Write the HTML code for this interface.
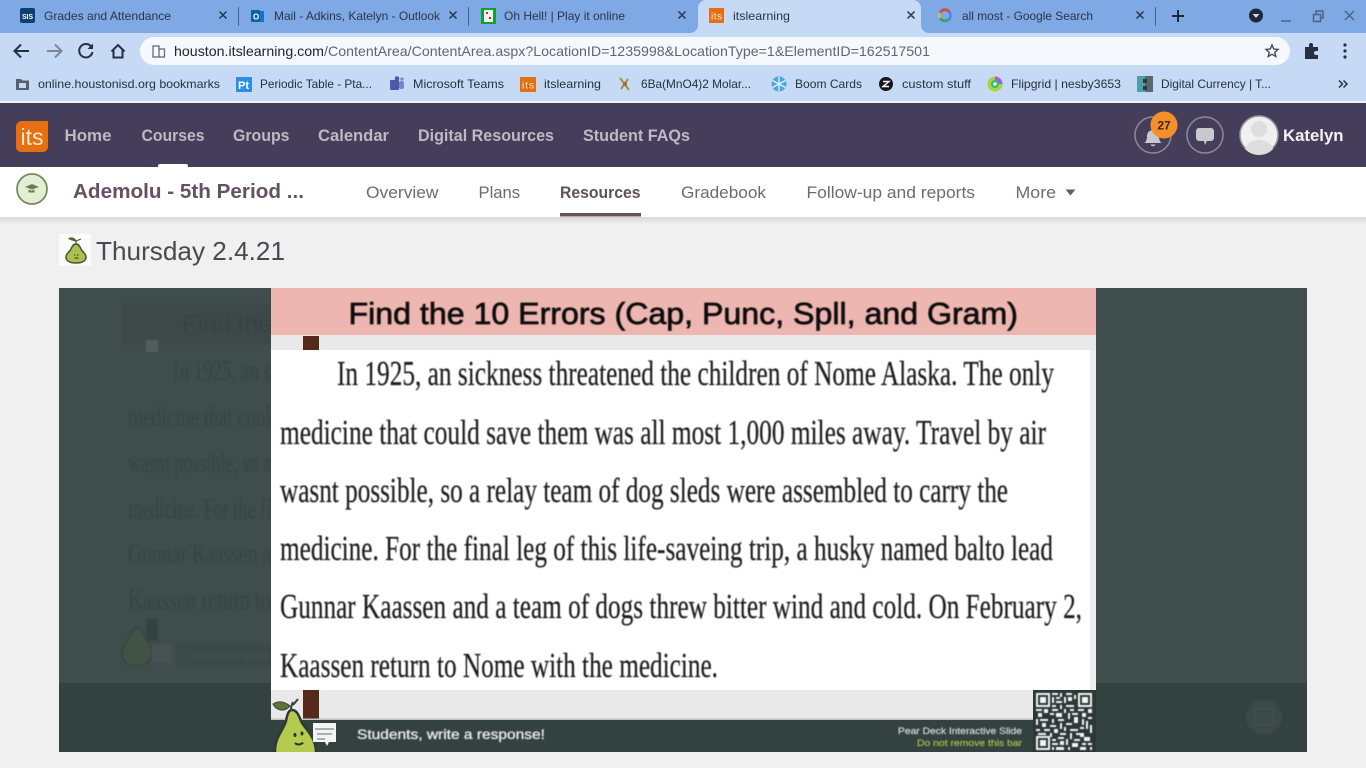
<!DOCTYPE html>
<html><head><meta charset="utf-8"><title>itslearning</title>
<style>
html,body{margin:0;padding:0;width:1366px;height:768px;overflow:hidden;background:#f0f0f0}
svg{display:block}
text{font-family:"Liberation Sans",sans-serif}
.t{font-size:12px;fill:#2a3448}
.b{font-size:12px;fill:#26303f}
.n{font-size:17px;font-weight:bold;fill:#bdbac6}
.s{font-size:17px;fill:#6f6a72}
.p{font-family:"Liberation Serif",serif;font-size:35px;fill:#1c1c1c;stroke:#1c1c1c;stroke-width:.2px}
.g{font-family:"Liberation Serif",serif;font-size:28px;fill:#364443}
</style></head><body>
<svg width="1366" height="768" viewBox="0 0 1366 768" xmlns="http://www.w3.org/2000/svg">
<defs>
<filter id="bl" x="-5%" y="-5%" width="110%" height="110%"><feGaussianBlur stdDeviation="0.45"/></filter>
<filter id="bl2" x="-5%" y="-5%" width="110%" height="110%"><feGaussianBlur stdDeviation="0.8"/></filter>
<linearGradient id="sh" x1="0" x2="0" y1="0" y2="1"><stop offset="0" stop-color="#d9d9d9"/><stop offset="1" stop-color="#f0f0f0"/></linearGradient>
</defs>
<rect width="1366" height="768" fill="#f0f0f0"/>
<!-- tab strip -->
<rect width="1366" height="33" fill="#7fa9e5"/>
<rect y="33" width="1366" height="68" fill="#c6d9f5"/>
<rect y="101" width="1366" height="2" fill="#eef1f6"/>
<path d="M690 33a8 8 0 0 0 8-8V8a8 8 0 0 1 8-8h207a8 8 0 0 1 8 8v17a8 8 0 0 0 8 8z" fill="#c6d9f5"/>
<rect x="238" y="7" width="1" height="19" fill="#46648f"/><rect x="468" y="7" width="1" height="19" fill="#46648f"/><rect x="1155" y="7" width="1" height="19" fill="#46648f"/>
<!-- tab favicons -->
<rect x="20" y="8" width="15" height="15" rx="2" fill="#0e3f73"/><text x="22" y="19" style="font-size:7px;font-weight:bold;fill:#fff" textLength="11">SIS</text>
<rect x="253" y="11" width="11" height="11" fill="#1a72c4"/><rect x="251" y="10" width="9" height="12" rx="1" fill="#0f5ea8"/><text x="253" y="19.500" style="font-size:8px;font-weight:bold;fill:#fff">O</text>
<rect x="481" y="8" width="15" height="16" fill="#14a02e"/><rect x="484" y="10" width="9" height="12" fill="#f4f4f4"/><rect x="486" y="12" width="2" height="2" fill="#c22"/><rect x="489" y="17" width="2" height="2" fill="#c22"/>
<rect x="709" y="8" width="15" height="15" fill="#e56f14"/><text x="711" y="19.500" style="font-size:10px;fill:#ffe8d0" textLength="11">its</text>
<circle cx="945" cy="15.500" r="5.500" fill="none" stroke="#4285f4" stroke-width="2.400"/><path d="M949.500 12a5.500 5.500 0 0 0-9-.3" fill="none" stroke="#ea4335" stroke-width="2.400"/><path d="M940 13a5.500 5.500 0 0 0 0 5" fill="none" stroke="#fbbc05" stroke-width="2.400"/><path d="M940.500 18.800a5.500 5.500 0 0 0 8 .5" fill="none" stroke="#34a853" stroke-width="2.400"/>
<!-- tab titles -->
<text class="t" x="44" y="20" textLength="127" lengthAdjust="spacingAndGlyphs">Grades and Attendance</text>
<text class="t" x="274" y="20" textLength="166" lengthAdjust="spacingAndGlyphs">Mail - Adkins, Katelyn - Outlook</text>
<text class="t" x="504" y="20" textLength="121" lengthAdjust="spacingAndGlyphs">Oh Hell! | Play it online</text>
<text class="t" x="733" y="20" textLength="57" lengthAdjust="spacingAndGlyphs">itslearning</text>
<text class="t" x="962" y="20" textLength="131" lengthAdjust="spacingAndGlyphs">all most - Google Search</text>
<g stroke="#27354d" stroke-width="1.500" fill="none">
<path d="M219.500 11.500l7 7m0-7l-7 7M449.500 11.500l7 7m0-7l-7 7M678.500 11.500l7 7m0-7l-7 7M907.500 11.500l7 7m0-7l-7 7M1136.500 11.500l7 7m0-7l-7 7"/>
</g>
<path d="M1178 10v12M1172 16h12" stroke="#1d2738" stroke-width="2" fill="none"/>
<circle cx="1256" cy="15.500" r="7" fill="#202735"/><path d="M1252.500 14h7l-3.500 4z" fill="#c6d9f5"/>
<path d="M1281 21h10" stroke="#4d6283" stroke-width="1.500"/>
<path d="M1313.500 14.500h7v7h-7zM1316 14v-3h7v7h-2.500" fill="none" stroke="#4d6283" stroke-width="1.500"/>
<path d="M1345 11l9 9m0-9l-9 9" stroke="#4d6283" stroke-width="1.500"/>
<!-- toolbar -->
<path d="M29 51H15M21 44.500L14.500 51l6.500 6.500" fill="none" stroke="#27303f" stroke-width="2"/>
<path d="M47 51h14M55 44.500l6.500 6.500-6.500 6.500" fill="none" stroke="#7d8797" stroke-width="2"/>
<path d="M91.500 47a6.700 6.700 0 1 0 1 5" fill="none" stroke="#27303f" stroke-width="2"/><path d="M93 43.500v5.500h-5.500z" fill="#27303f"/>
<path d="M111.500 51.500l6.500-6.500 6.500 6.500M113.500 50v7.500h9V50" fill="none" stroke="#27303f" stroke-width="2"/>
<rect x="140" y="37" width="1150" height="28" rx="14" fill="#f5f8fd"/>
<path d="M153 46h6v11h-6zM159 49h5.500v8H159z" fill="none" stroke="#5b6470" stroke-width="1.200"/>
<text x="174" y="56" style="font-size:14px" textLength="756" lengthAdjust="spacingAndGlyphs"><tspan fill="#20242b">houston.itslearning.com</tspan><tspan fill="#5e6670">/ContentArea/ContentArea.aspx?LocationID=1235998&amp;LocationType=1&amp;ElementID=162517501</tspan></text>
<path d="M1272 45l1.800 4 4.300.4-3.300 2.900 1 4.200-3.800-2.300-3.800 2.300 1-4.200-3.300-2.900 4.300-.4z" fill="none" stroke="#3a414c" stroke-width="1.300"/>
<path d="M1305 47h4v-2a2 2 0 0 1 4 0v2h5v4h-2a2 2 0 0 0 0 4h2v4h-13z" fill="#27303f"/>
<circle cx="1345" cy="45" r="1.600" fill="#27303f"/><circle cx="1345" cy="51" r="1.600" fill="#27303f"/><circle cx="1345" cy="57" r="1.600" fill="#27303f"/>
<!-- bookmarks -->
<path d="M16 79h5l1.500 1.500H29V90H16z" fill="#55606e"/><rect x="19" y="83" width="7" height="5" fill="#c6d9f5"/>
<text class="b" x="38" y="88" textLength="182" lengthAdjust="spacingAndGlyphs">online.houstonisd.org bookmarks</text>
<rect x="236" y="77" width="16" height="15" fill="#2e8fe0"/><text x="238" y="89" style="font-size:11px;font-weight:bold;fill:#fff">Pt</text>
<text class="b" x="260" y="88" textLength="112" lengthAdjust="spacingAndGlyphs">Periodic Table - Pta...</text>
<rect x="390" y="80" width="9" height="10" rx="1" fill="#5059a9"/><circle cx="397" cy="78.500" r="2.300" fill="#5059a9"/><rect x="399" y="81" width="5" height="8" rx="2" fill="#7b83c9"/><circle cx="402" cy="79" r="1.600" fill="#7b83c9"/>
<text class="b" x="413" y="88" textLength="91" lengthAdjust="spacingAndGlyphs">Microsoft Teams</text>
<rect x="520" y="77" width="16" height="15" fill="#e56f14"/><text x="522" y="88.500" style="font-size:10px;fill:#ffe8d0" textLength="12">its</text>
<text class="b" x="544" y="88" textLength="57" lengthAdjust="spacingAndGlyphs">itslearning</text>
<path d="M620 78l9 12M628 79l-7 10" stroke="#8a9a4a" stroke-width="2"/><circle cx="625" cy="84" r="2" fill="#c65a2a"/>
<text class="b" x="641" y="88" textLength="110" lengthAdjust="spacingAndGlyphs">6Ba(MnO4)2 Molar...</text>
<circle cx="779" cy="84" r="7.500" fill="#4aa9d9"/><path d="M779 77v14M772.500 80.500l13 7M785.500 80.500l-13 7" stroke="#dff2fb" stroke-width="1.300"/>
<text class="b" x="795" y="88" textLength="67" lengthAdjust="spacingAndGlyphs">Boom Cards</text>
<circle cx="886" cy="84" r="7" fill="#14161a"/><path d="M883 81.500h6l-6 5h6" stroke="#fff" stroke-width="1.400" fill="none"/>
<text class="b" x="902" y="88" textLength="69" lengthAdjust="spacingAndGlyphs">custom stuff</text>
<circle cx="995" cy="84" r="7.500" fill="#a7d83a"/><path d="M995 76.500a7.500 7.500 0 0 1 7.500 7.500H995z" fill="#a35ed9"/><circle cx="995" cy="84" r="4" fill="#2fbf70"/><circle cx="995" cy="84" r="1.800" fill="#fff"/>
<text class="b" x="1011" y="88" textLength="110" lengthAdjust="spacingAndGlyphs">Flipgrid | nesby3653</text>
<rect x="1137" y="76" width="16" height="16" fill="#4b9fa8"/><rect x="1145" y="76" width="8" height="16" fill="#5d6670"/><rect x="1143" y="79" width="4" height="4" fill="#2c3b42"/><rect x="1143" y="86" width="4" height="4" fill="#2c3b42"/>
<text class="b" x="1161" y="88" textLength="110" lengthAdjust="spacingAndGlyphs">Digital Currency | T...</text>
<path d="M1339 80.500l3.500 3.500-3.500 3.500M1343.500 80.500l3.500 3.500-3.500 3.500" fill="none" stroke="#27303f" stroke-width="1.500"/>
<!-- app nav -->
<rect y="103" width="1366" height="64" fill="#453e5a"/>
<path d="M22 121h26v26a5 5 0 0 1-5 5H21a5 5 0 0 1-5-5v-20a6 6 0 0 1 6-6z" fill="#e86f11"/>
<text x="20.500" y="145" style="font-size:23px;fill:#fde6cf" textLength="23" lengthAdjust="spacingAndGlyphs">its</text>
<text class="n" x="64.500" y="141" textLength="47" lengthAdjust="spacingAndGlyphs">Home</text>
<text class="n" x="141.500" y="141" textLength="63" lengthAdjust="spacingAndGlyphs">Courses</text>
<text class="n" x="233" y="141" textLength="56.500" lengthAdjust="spacingAndGlyphs">Groups</text>
<text class="n" x="318" y="141" textLength="71" lengthAdjust="spacingAndGlyphs">Calendar</text>
<text class="n" x="418" y="141" textLength="136" lengthAdjust="spacingAndGlyphs">Digital Resources</text>
<text class="n" x="583" y="141" textLength="107" lengthAdjust="spacingAndGlyphs">Student FAQs</text>
<path d="M158 167v-1a2 2 0 0 1 2-2h26a2 2 0 0 1 2 2v1z" fill="#fff"/>
<circle cx="1153" cy="135" r="18" fill="none" stroke="#8e8a9b" stroke-width="1.500"/>
<path d="M1144.500 143c2-2 2.500-4 2.500-7a6 6 0 0 1 12 0c0 3 .5 5 2.500 7z" fill="#c9c7d0"/><path d="M1150.500 144.500a2.700 2.700 0 0 0 5 0z" fill="#c9c7d0"/>
<circle cx="1164" cy="125" r="13.500" fill="#f58f2a"/>
<text x="1164" y="129.500" text-anchor="middle" style="font-size:12px;font-weight:bold;fill:#3a2a20">27</text>
<circle cx="1205" cy="135" r="18" fill="none" stroke="#8e8a9b" stroke-width="1.500"/>
<path d="M1199 128h12a3 3 0 0 1 3 3v7a3 3 0 0 1-3 3h-4l-2 4-1-4h-5a3 3 0 0 1-3-3v-7a3 3 0 0 1 3-3z" fill="#c9c7d0"/>
<circle cx="1259" cy="135" r="19" fill="#f0f0f0" stroke="#9b97a6" stroke-width="1.500"/>
<circle cx="1259" cy="129" r="8" fill="#dedede"/><path d="M1245 149c2-7 8-9 14-9s12 2 14 9a19 19 0 0 1-28 0z" fill="#dedede"/>
<text x="1283" y="141" style="font-size:17px;font-weight:bold;fill:#f3f2f5" textLength="60.500" lengthAdjust="spacingAndGlyphs">Katelyn</text>
<!-- sub nav -->
<rect y="217" width="1366" height="8" fill="url(#sh)"/>
<rect y="167" width="1366" height="50" fill="#fff"/>
<circle cx="32" cy="189" r="15" fill="#e3efd2" stroke="#75875f" stroke-width="1.700"/>
<path d="M25 187l7-3 7 3-7 2.500z" fill="#6a7b5a"/><path d="M28.500 189.500v3h6v-3l-3 1.200z" fill="#6a7b5a"/>
<text x="73" y="198" style="font-size:20px;font-weight:bold;fill:#635263" textLength="231" lengthAdjust="spacingAndGlyphs">Ademolu - 5th Period ...</text>
<text class="s" x="366" y="198" textLength="72.500" lengthAdjust="spacingAndGlyphs">Overview</text>
<text class="s" x="478.500" y="198" textLength="41.500" lengthAdjust="spacingAndGlyphs">Plans</text>
<text x="560" y="198" style="font-size:17px;font-weight:bold;fill:#5f5060" textLength="80.500" lengthAdjust="spacingAndGlyphs">Resources</text>
<rect x="560" y="213" width="81" height="3.500" fill="#65525f"/>
<text class="s" x="681" y="198" textLength="85" lengthAdjust="spacingAndGlyphs">Gradebook</text>
<text class="s" x="806.500" y="198" textLength="168.500" lengthAdjust="spacingAndGlyphs">Follow-up and reports</text>
<text class="s" x="1015.500" y="198" textLength="40.500" lengthAdjust="spacingAndGlyphs">More</text>
<path d="M1065.500 189.500h10l-5 6z" fill="#6a5a68"/>
<!-- heading -->
<rect x="59" y="234" width="32" height="32" fill="#fbfbfb"/>
<path d="M76 244c3 0 4 3 5 5 1.500 3 5 4.500 5 8 0 4-4 6-10 6s-10-2-10-6c0-3.500 3.500-5 5-8 1-2 2-5 5-5z" fill="#a8c24a" stroke="#4a4f3c" stroke-width="1.500"/>
<path d="M76 244v-4M76 241c-3-1-5-1-7-2.500 2-1 5-1 7 2.500zM76 241l5-2" stroke="#4f6430" stroke-width="1.200" fill="#5a7236"/>
<path d="M74 255h1.500M77 255h1.500M74.500 258h4" stroke="#4a4f3c" stroke-width="1.200"/>
<text x="96" y="260" style="font-size:26px;fill:#4b484f" textLength="189" lengthAdjust="spacingAndGlyphs">Thursday 2.4.21</text>
<!-- embed background -->
<rect x="59" y="288" width="1248" height="395" fill="#3f4d4c"/>
<rect x="59" y="683" width="1248" height="69" fill="#33413f"/>
<g filter="url(#bl2)">
<rect x="122" y="303" width="150" height="42" fill="#3c4a49"/>
<rect x="146" y="340" width="12" height="12" fill="#505d5c"/>
<text x="182" y="332" style="font-size:24px;fill:#364443;stroke:#364443;stroke-width:.4px" textLength="90" lengthAdjust="spacingAndGlyphs">Find the</text>
<text class="g" x="173" y="380" textLength="98" lengthAdjust="spacingAndGlyphs">In 1925, an s</text>
<text class="g" x="128" y="426" textLength="143" lengthAdjust="spacingAndGlyphs">medicine that coul</text>
<text class="g" x="128" y="472" textLength="143" lengthAdjust="spacingAndGlyphs">wasnt possible, so a</text>
<text class="g" x="128" y="518" textLength="143" lengthAdjust="spacingAndGlyphs">medicine. For the fi</text>
<text class="g" x="128" y="563" textLength="143" lengthAdjust="spacingAndGlyphs">Gunnar Kaassen a</text>
<text class="g" x="128" y="609" textLength="143" lengthAdjust="spacingAndGlyphs">Kaassen return to</text>
<rect x="146" y="619" width="12" height="22" fill="#364342"/>
<rect x="175" y="643" width="96" height="24" fill="#3a4847"/>
<path d="M138 628c4 0 5 4 6 8 2 5 8 8 8 17 0 6-5 13-16 13s-14-7-14-13c0-9 6-12 8-17 1-4 4-8 8-8z" fill="#3f5245" stroke="#34423f" stroke-width="1.500"/>
<rect x="152" y="645" width="20" height="18" fill="#465352"/>
<text x="189" y="659" style="font-size:11px;fill:#465352" textLength="80" lengthAdjust="spacingAndGlyphs">Students, write</text>
<circle cx="1264" cy="717" r="18" fill="#3a4846"/>
<rect x="1255" y="709" width="18" height="16" fill="none" stroke="#3f4d4b" stroke-width="2.500"/>
</g>
<!-- slide -->
<rect x="271" y="288" width="825" height="47" fill="#eeb6b1"/>
<rect x="271" y="335" width="825" height="15" fill="#e9e9e9"/>
<rect x="303" y="336" width="16" height="14" fill="#562a18"/>
<rect x="271" y="350" width="825" height="340" fill="#fff"/>
<rect x="1090" y="350" width="6" height="340" fill="#eeeeee"/>
<rect x="271" y="690" width="762" height="29" fill="#e9e9e9"/>
<rect x="303" y="690" width="16" height="29" fill="#562a18"/>
<rect x="271" y="719" width="825" height="33" fill="#33413f"/>
<rect x="271" y="718.500" width="762" height="1.500" fill="#bfc4c3"/>
<g filter="url(#bl)">
<text x="348.500" y="324" style="font-size:31px;fill:#0c0c0c;stroke:#0c0c0c;stroke-width:.7px" textLength="669.500" lengthAdjust="spacingAndGlyphs">Find the 10 Errors (Cap, Punc, Spll, and Gram)</text>
<text class="p" x="337" y="385" textLength="717" lengthAdjust="spacingAndGlyphs">In 1925, an sickness threatened the children of Nome Alaska. The only</text>
<text class="p" x="280" y="444" textLength="766" lengthAdjust="spacingAndGlyphs">medicine that could save them was all most 1,000 miles away. Travel by air</text>
<text class="p" x="280" y="502" textLength="728" lengthAdjust="spacingAndGlyphs">wasnt possible, so a relay team of dog sleds were assembled to carry the</text>
<text class="p" x="280" y="560" textLength="773" lengthAdjust="spacingAndGlyphs">medicine. For the final leg of this life-saveing trip, a husky named balto lead</text>
<text class="p" x="280" y="618" textLength="802" lengthAdjust="spacingAndGlyphs">Gunnar Kaassen and a team of dogs threw bitter wind and cold. On February 2,</text>
<text class="p" x="280" y="677" textLength="438" lengthAdjust="spacingAndGlyphs">Kaassen return to Nome with the medicine.</text>
</g>
<!-- pear -->
<g>
<path d="M292 710c5 0 7 6 9 11 3 7 14 14 15 30v6h-41v-6c0-14 8-20 11-30 1-5 2-11 6-11z" fill="#b5cb4f" stroke="#2f3a38" stroke-width="2.500"/>
<path d="M291 710c0-3 1-6 2-8" stroke="#36403c" stroke-width="2" fill="none"/>
<path d="M290 706c-6-5-12-5-17-2 3 6 11 9 17 2z" fill="#5d7438" stroke="#39423a" stroke-width="1"/>
<path d="M293 705l5-6" stroke="#36403c" stroke-width="2"/>
<ellipse cx="295" cy="735" rx="1.500" ry="2" fill="#2d3431"/><ellipse cx="302" cy="733.500" rx="1.500" ry="2" fill="#2d3431"/>
<path d="M295 743c2 2 6 2 8-.5" stroke="#2d3431" stroke-width="2" fill="none"/>
<path d="M313 723h23v19h-7l-2 4-2-4h-12z" fill="#f4f4f4"/>
<path d="M315 729h19M317 734h15M317 739h8" stroke="#7b8786" stroke-width="1.300"/>
</g>
<rect y="752" width="1366" height="16" fill="#f0f0f0"/>
<g filter="url(#bl)">
<text x="357" y="739" style="font-size:13.500px;fill:#e8eaea;stroke:#e8eaea;stroke-width:.35px" textLength="188" lengthAdjust="spacingAndGlyphs">Students, write a response!</text>
<text x="898" y="734" style="font-size:9px;fill:#d5d9d9;stroke:#d5d9d9;stroke-width:.2px" textLength="124" lengthAdjust="spacingAndGlyphs">Pear Deck Interactive Slide</text>
<text x="917" y="746" style="font-size:9px;fill:#a4bf4c;stroke:#a4bf4c;stroke-width:.2px" textLength="105" lengthAdjust="spacingAndGlyphs">Do not remove this bar</text>
</g>
<!-- QR -->
<rect x="1033" y="690" width="63" height="62" fill="#2c3836"/>
<g filter="url(#bl)" fill="#f4f4f4">
<path fill-rule="evenodd" d="M1036 693h14v14h-14zM1038 695v10h10v-10zM1078 693h14v14h-14zM1080 695v10h10v-10zM1036 736h14v14h-14zM1038 738v10h10v-10z"/>
<path d="M1040 697h6v6h-6zM1082 697h6v6h-6zM1040 740h6v6h-6z"/>
<path d="M1052 693h6v2h-6zM1060 693h2v4h-2zM1066 693h6v2h-6zM1074 695h2v4h-2zM1052 697h2v6h-2zM1056 697h4v2h-4zM1064 697h2v6h-2zM1068 697h4v4h-4zM1056 701h6v2h-6zM1052 705h4v2h-4zM1060 705h2v4h-2zM1066 705h8v2h-8zM1036 709h6v2h-6zM1044 709h4v4h-4zM1052 709h6v2h-6zM1064 709h2v4h-2zM1070 709h4v2h-4zM1078 709h6v2h-6zM1088 709h4v4h-4zM1038 713h4v4h-4zM1050 713h4v2h-4zM1056 713h6v4h-6zM1068 713h2v6h-2zM1072 713h6v2h-6zM1082 713h4v4h-4zM1036 719h2v6h-2zM1040 719h8v2h-8zM1052 719h2v4h-2zM1058 719h6v2h-6zM1074 717h4v6h-4zM1082 719h2v6h-2zM1088 717h4v2h-4zM1042 723h4v4h-4zM1050 725h6v2h-6zM1060 723h2v6h-2zM1066 723h6v2h-6zM1086 721h2v8h-2zM1036 729h4v2h-4zM1044 729h6v2h-6zM1054 729h4v4h-4zM1064 727h2v4h-2zM1070 729h8v2h-8zM1080 727h4v2h-4zM1090 725h2v8h-2zM1038 733h8v2h-8zM1050 733h2v4h-2zM1060 733h6v2h-6zM1070 733h2v6h-2zM1076 733h8v4h-4v-2h-4zM1052 739h4v2h-4zM1058 737h6v2h-6zM1066 739h2v6h-2zM1074 739h6v2h-6zM1084 737h6v4h-6zM1052 743h6v2h-6zM1060 741h4v4h-4zM1072 743h6v4h-6zM1082 743h4v2h-4zM1088 743h4v2h-4zM1052 747h2v3h-2zM1056 747h8v3h-8zM1068 747h2v3h-2zM1080 747h6v3h-6zM1090 747h2v3h-2z"/>
</g>
</svg>
</body></html>
